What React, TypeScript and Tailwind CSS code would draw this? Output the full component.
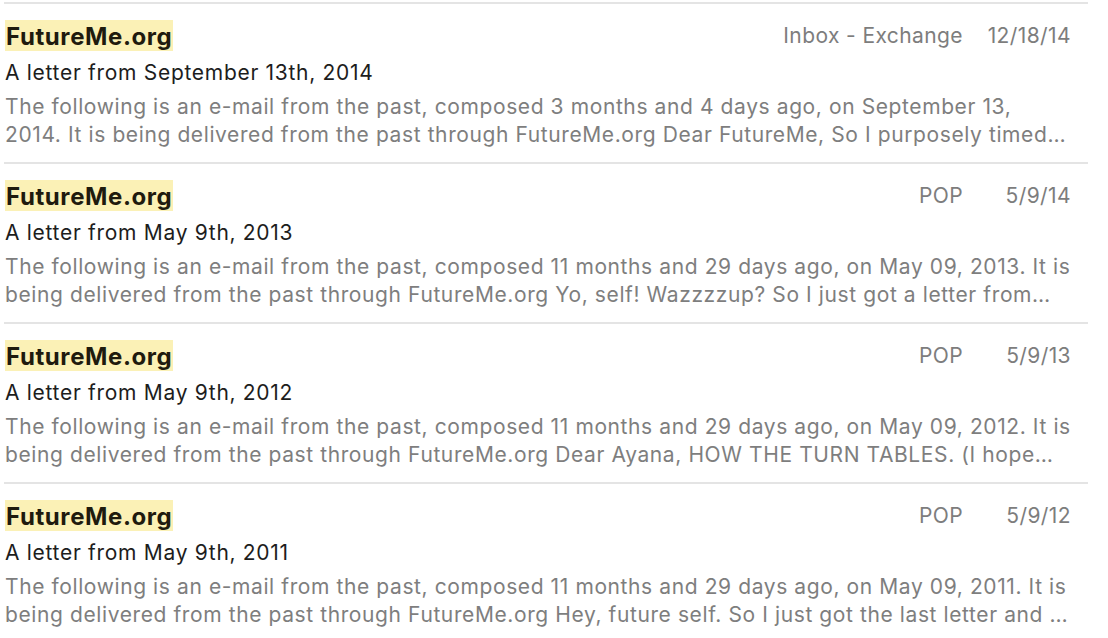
const messages = [
  {
    sender: "FutureMe.org",
    account: "Inbox - Exchange",
    date: "12/18/14",
    subject: "A letter from September 13th, 2014",
    preview:
      "The following is an e-mail from the past, composed 3 months and 4 days ago, on September 13, 2014. It is being delivered from the past through FutureMe.org Dear FutureMe, So I purposely timed this letter to arrive right around the end of the semester so that you could read it and reflect.",
  },
  {
    sender: "FutureMe.org",
    account: "POP",
    date: "5/9/14",
    subject: "A letter from May 9th, 2013",
    preview:
      "The following is an e-mail from the past, composed 11 months and 29 days ago, on May 09, 2013. It is being delivered from the past through FutureMe.org Yo, self! Wazzzzup? So I just got a letter from 2012 and it was pretty great.",
  },
  {
    sender: "FutureMe.org",
    account: "POP",
    date: "5/9/13",
    subject: "A letter from May 9th, 2012",
    preview:
      "The following is an e-mail from the past, composed 11 months and 29 days ago, on May 09, 2012. It is being delivered from the past through FutureMe.org Dear Ayana, HOW THE TURN TABLES. (I hope you got that reference.)",
  },
  {
    sender: "FutureMe.org",
    account: "POP",
    date: "5/9/12",
    subject: "A letter from May 9th, 2011",
    preview:
      "The following is an e-mail from the past, composed 11 months and 29 days ago, on May 09, 2011. It is being delivered from the past through FutureMe.org Hey, future self. So I just got the last letter and it made me smile.",
  },
];

function MessageRow({ m }: { m: (typeof messages)[number] }) {
  return (
    <div className="h-[160px] border-t-2 border-[#e4e4e4] pt-[16px] pr-[17px] pl-[1px]">
      <div className="flex items-center justify-between">
        <span className="inline-block h-[31px] bg-[#fbf1b6] px-[1px] pt-[1px] text-[24px] leading-[32px] font-bold tracking-[0.6px] text-[#1f1b0e]">
          {m.sender}
        </span>
        <div className="flex items-center gap-[20px] text-[21px] tracking-[0.4px] text-[#7d7d7d]">
          <span>{m.account}</span>
          <span className="w-[88px] text-right">{m.date}</span>
        </div>
      </div>
      <div className="mt-[8px] text-[21px] leading-[26px] tracking-[0.7px] text-[#1d1d1d]">{m.subject}</div>
      <p className="mt-[7px] line-clamp-2 text-[21px] leading-[28px] tracking-[0.6px] text-[#7e7e7e]">{m.preview}</p>
    </div>
  );
}

export default function App() {
  return (
    <div className="h-[638px] w-[1108px] overflow-hidden bg-white pt-[2px] pl-[4px] pr-[20px] font-['Inter',sans-serif] antialiased">
      {messages.map((m, i) => (
        <MessageRow key={i} m={m} />
      ))}
    </div>
  );
}
